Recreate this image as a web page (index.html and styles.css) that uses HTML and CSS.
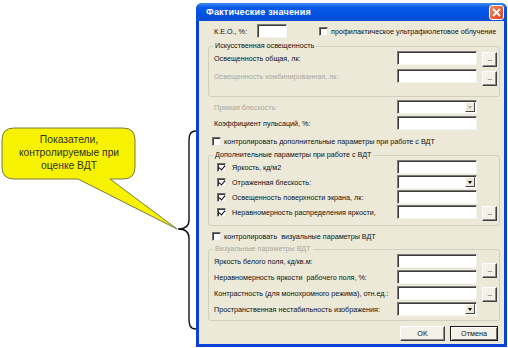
FILE: index.html
```html
<!DOCTYPE html>
<html lang="ru">
<head>
  <meta charset="UTF-8">
  <title>Фактические значения</title>
  <link rel="stylesheet" href="styles.css">
</head>
<body>
  <!-- ВЫНОСКА СЛЕВА -->
  <div class="note">
    <svg class="note-shape" width="200" height="348" viewBox="0 0 200 348">
      <path d="M14,128 L123,128 Q135,128 135,140 L135,167 Q135,179 123,179 L110,179 L177,229 L78,179 L14,179 Q2,179 2,167 L2,140 Q2,128 14,128 Z"
            fill="#f7f200" stroke="#7a7a40" stroke-width="1"/>
      <path d="M196,131 C190,131 189,135 189,142 L189,220 C189,226 186,229 178,229 C186,229 189,232 189,238 L189,318 C189,325 190,329 196,329"
            fill="none" stroke="#111" stroke-width="1.4"/>
    </svg>
    <div class="note-text">Показатели,<br>контролируемые при<br>оценке ВДТ</div>
  </div>

  <!-- ОКНО ДИАЛОГА -->
  <div class="dialog">
    <div class="titlebar">
      <span class="title">Фактические значения</span>
      <span class="close">
        <svg width="9" height="9" viewBox="0 0 9 9"><path d="M1,1 L8,8 M8,1 L1,8" stroke="#fff" stroke-width="1.8"/></svg>
      </span>
    </div>

    <div class="client">
      <div class="row top">
        <span class="keo-label">К.Е.О., %:</span>
        <span class="field keo"></span>
        <span class="check"><span class="box"></span>профилактическое ультрафиолетовое облучение</span>
      </div>

      <fieldset class="group g1">
        <legend>Искусственная освещенность</legend>
        <div class="row">
          <span class="label">Освещенность общая, лк:</span>
          <span class="field"></span>
          <span class="dots">...</span>
        </div>
        <div class="row gap4">
          <span class="label off">Освещенность комбинированная, лк:</span>
          <span class="field"></span>
          <span class="dots low2">...</span>
        </div>
      </fieldset>

      <div class="row plain first">
        <span class="label off">Прямая блескость:</span>
        <span class="field combo disabled"><span class="arrow"></span></span>
        <span class="slot"></span>
      </div>
      <div class="row plain">
        <span class="label">Коэффициент пульсаций, %:</span>
        <span class="field"></span>
        <span class="slot"></span>
      </div>

      <div class="check outer c1"><span class="box"></span>контролировать дополнительные параметры при работе с ВДТ</div>

      <fieldset class="group g2">
        <legend>Дополнительные параметры при работе с ВДТ</legend>
        <div class="row">
          <span class="label"><span class="box on"></span>Яркость, кд/м2</span>
          <span class="field"></span>
          <span class="slot"></span>
        </div>
        <div class="row">
          <span class="label"><span class="box on"></span>Отраженная блескость:</span>
          <span class="field combo"><span class="arrow"></span></span>
          <span class="slot"></span>
        </div>
        <div class="row">
          <span class="label"><span class="box on"></span>Освещенность поверхности экрана, лк:</span>
          <span class="field"></span>
          <span class="slot"></span>
        </div>
        <div class="row">
          <span class="label"><span class="box on"></span>Неравномерность распределения яркости,</span>
          <span class="field"></span>
          <span class="dots">...</span>
        </div>
      </fieldset>

      <div class="check outer c2"><span class="box"></span>контролировать &nbsp;визуальные параметры ВДТ</div>

      <fieldset class="group g3">
        <legend class="off">Визуальные параметры ВДТ</legend>
        <div class="row">
          <span class="label">Яркость белого поля, кд/кв.м:</span>
          <span class="field"></span>
          <span class="dots low9">...</span>
        </div>
        <div class="row">
          <span class="label">Неравномерность яркости &nbsp;рабочего поля, %:</span>
          <span class="field"></span>
          <span class="slot"></span>
        </div>
        <div class="row">
          <span class="label">Контрастность (для монохромного режима), отн.ед.:</span>
          <span class="field"></span>
          <span class="dots">...</span>
        </div>
        <div class="row">
          <span class="label">Пространственная нестабильность изображения:</span>
          <span class="field combo"><span class="arrow"></span></span>
          <span class="slot"></span>
        </div>
      </fieldset>

      <div class="buttons">
        <span class="btn ok">OK</span>
        <span class="btn cancel">Отмена</span>
      </div>
    </div>
  </div>
</body>
</html>
```

FILE: styles.css
```css
/* ОБЩЕЕ */
* {
  margin: 0;
  padding: 0;
  box-sizing: border-box;
}
body {
  width: 508px;
  height: 348px;
  overflow: hidden;
  background: #fff;
  display: flex;
  font-family: "Liberation Sans", Arial, sans-serif;
  font-size: 7.2px;
  color: #111;
}

/* ВЫНОСКА */
.note {
  position: relative;
  width: 196px;
  flex: none;
}
.note-shape {
  position: absolute;
  top: 0;
  left: 0;
  overflow: visible;
}
.note-text {
  position: absolute;
  top: 133px;
  left: 4px;
  width: 130px;
  text-align: center;
  font-size: 10.3px;
  line-height: 13px;
  color: #333;
}

/* ОКНО */
.dialog {
  width: 311px;
  height: 344px;
  margin-top: 3px;
  display: flex;
  flex-direction: column;
  background: #0842d8;
  border-radius: 6px 6px 0 0;
}
.titlebar {
  height: 18px;
  flex: none;
  display: flex;
  align-items: center;
  justify-content: space-between;
  padding: 0 3px 0 10px;
  background: linear-gradient(to bottom, #3c8cf3 0%, #0a5ae6 25%, #0053e2 60%, #0b4cd4 100%);
  border-radius: 6px 6px 0 0;
}
.title {
  color: #fff;
  font-weight: bold;
  font-size: 9px;
  letter-spacing: 0.2px;
}
.close {
  width: 15px;
  height: 15px;
  display: flex;
  align-items: center;
  justify-content: center;
  background: linear-gradient(135deg, #f08a5e, #d9431d);
  border: 1px solid #fff;
  border-radius: 3px;
}

.client {
  flex: 1;
  margin: 0 3px 3px;
  background: #ece9d8;
  padding: 3px 4px 0 9px;
  display: flex;
  flex-direction: column;
}

/* СТРОКИ */
.row {
  height: 14px;
  display: flex;
  align-items: flex-start;
  padding: 0 2px 0 5px;
}
.row .label {
  flex: 1;
  display: flex;
  align-items: center;
  height: 14px;
  white-space: nowrap;
}
.row.plain {
  padding-left: 6px;
  padding-right: 3px;
}
.row.first { margin-top: 3px; }
.row.plain + .row.plain { margin-top: 2px; }
.gap4 { margin-top: 4px; }
.off { color: #aca899; }

.row.top {
  padding-left: 6px;
  align-items: center;
}
.keo-label {
  width: 43px;
  white-space: nowrap;
}
.field {
  width: 80px;
  height: 14px;
  flex: none;
  background: #fff;
  border: 1px solid;
  border-color: #7b7b7b #f4f4f0 #f4f4f0 #7b7b7b;
  box-shadow: inset 1px 1px 0 #3a3a3a;
  display: flex;
  justify-content: flex-end;
  align-items: center;
  padding-right: 1px;
}
.field.keo { width: 30px; margin-right: 32px; }

.combo .arrow {
  width: 10px;
  height: 10px;
  background: #ece9d8;
  border: 1px solid;
  border-color: #fff #444 #444 #fff;
  position: relative;
}
.combo .arrow::after {
  content: "";
  position: absolute;
  top: 3px;
  left: 2px;
  border-left: 2.5px solid transparent;
  border-right: 2.5px solid transparent;
  border-top: 3px solid #000;
}
.combo.disabled .arrow::after { border-top-color: #aca899; }

.slot {
  width: 15px;
  margin-left: 5px;
  flex: none;
}
.dots {
  width: 15px;
  height: 15px;
  margin-left: 5px;
  margin-top: 1px;
  flex: none;
  background: #f3f1e8;
  border: 1px solid;
  border-color: #fff #404040 #404040 #fff;
  box-shadow: inset -1px -1px 0 #8a8a8a;
  font-size: 7px;
  line-height: 11px;
  text-align: center;
  letter-spacing: -0.5px;
}
.dots.low2 { margin-top: 2px; }
.dots.low9 { margin-top: 9px; }

/* ФЛАЖКИ */
.check {
  display: flex;
  align-items: center;
  white-space: nowrap;
}
.box {
  width: 9px;
  height: 9px;
  flex: none;
  background: #fff;
  border: 1px solid;
  border-color: #6f6f6f #e8e8e8 #e8e8e8 #6f6f6f;
  box-shadow: inset 1px 1px 0 #3a3a3a;
  margin-right: 3px;
  position: relative;
}
.row .label .box {
  margin-left: 3px;
  margin-right: 6px;
}
.box.on::after {
  content: "";
  position: absolute;
  left: 2px;
  top: 0;
  width: 3px;
  height: 5px;
  border-right: 1.5px solid #000;
  border-bottom: 1.5px solid #000;
  transform: rotate(40deg);
}
.check.outer {
  height: 12px;
  padding-left: 4px;
}
.c1 { margin-top: 5px; }
.c2 { margin-top: 4px; }

/* ГРУППЫ */
.group {
  border: 1px solid #d0d0bf;
  border-radius: 3px;
  padding: 0;
  min-width: 0;
}
.group legend {
  margin-left: 4px;
  padding: 0 2px;
  line-height: 10px;
  height: 10px;
}
.g1 { margin-top: 3px; padding-bottom: 13px; }
.g2 { margin-top: 3px; padding-bottom: 6px; }
.g2 .row + .row { margin-top: 1px; }
.g3 { margin-top: 2px; padding-bottom: 4px; }
.g3 .row + .row { margin-top: 2px; }

/* КНОПКИ */
.buttons {
  display: flex;
  justify-content: flex-end;
  gap: 5px;
  margin-top: 5px;
  padding-right: 2px;
}
.btn {
  height: 15px;
  display: flex;
  align-items: center;
  justify-content: center;
  background: #f3f1e8;
  border: 1px solid;
  border-color: #fff #404040 #404040 #fff;
  box-shadow: inset -1px -1px 0 #8a8a8a;
}
.btn.ok { width: 45px; }
.btn.cancel {
  width: 48px;
  border: 1px solid #1a1a1a;
  box-shadow: inset 1px 1px 0 #fff, inset -1px -1px 0 #707070;
}
```
